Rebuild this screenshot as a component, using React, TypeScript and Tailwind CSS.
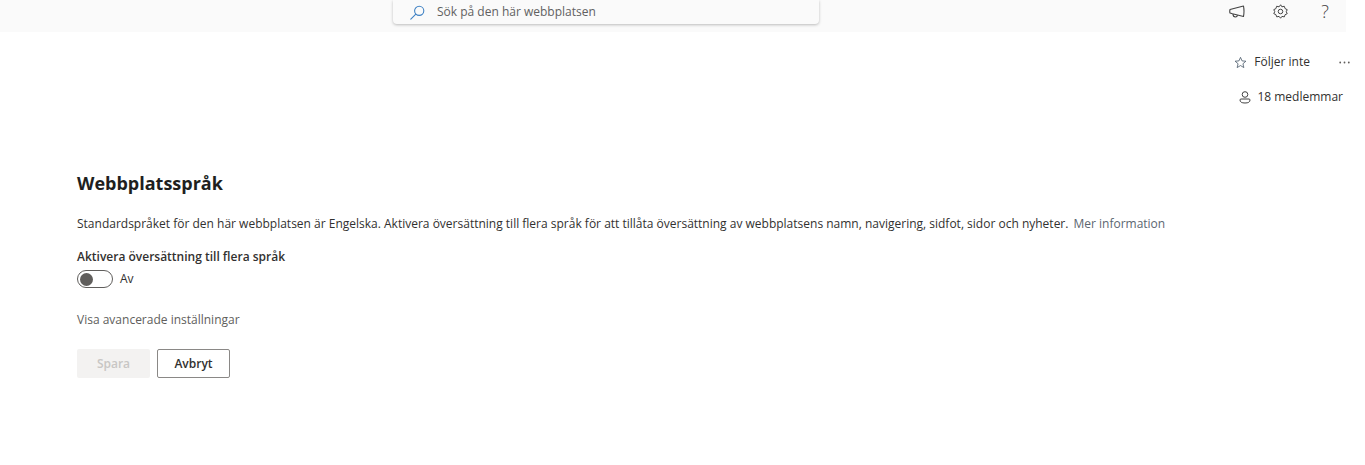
import React from "react";

export default function App() {
  return (
    <div className="w-[1365px] h-[465px] bg-white overflow-hidden font-['Open_Sans',sans-serif] text-[#323130] relative">
      <header className="w-[1346px] h-8 bg-[#fafafa] flex items-start">
        <div className="ml-[393px] w-[426px] h-6 bg-[#fafafa] rounded-b-[4px] shadow-[0_1px_3px_rgba(0,0,0,0.25)] flex items-center pl-[17px]">
          <svg width="15" height="15" viewBox="0 0 15 15" fill="none" stroke="#3f82c4" strokeWidth="1.1"><circle cx="9.2" cy="5.8" r="4.6" /><path d="M5.8 9.2 L0.8 14.2" strokeLinecap="round" /></svg>
          <span className="ml-[12px] text-[12px] text-[#616161]">Sök på den här webbplatsen</span>
        </div>
        <div className="ml-auto flex items-center h-5 mt-px mr-[15px] text-[#424242]">
          <svg width="16" height="13" viewBox="0 0 16 13" fill="none" stroke="#424242" strokeWidth="1.1" strokeLinejoin="round"><path d="M1 4.5 Q0.5 6.5 1 8 L3.5 8.8 L14.5 11.5 Q15.5 6 14.5 1 Z" /><path d="M4 9 Q4 12 6.5 12 Q8.2 12 8.5 10.2" /></svg>
          <svg className="ml-[27px]" width="17" height="17" viewBox="0 0 24 24" fill="none" stroke="#424242" strokeWidth="1.4"><circle cx="12" cy="12" r="3.2" /><path d="M12.2 2.5 14 5.4 17.3 4.6 18.5 7.9 21.5 9.4 20.1 12.3 21.5 15.1 18.5 16.5 17.4 19.6 14 18.9 12.1 21.5 10 18.9 6.7 19.6 5.5 16.4 2.5 15 3.9 12.2 2.5 9.4 5.5 7.9 6.6 4.6 10 5.4Z" strokeLinejoin="round" /></svg>
          <span className="ml-[30px] text-[18px] font-light leading-none w-3 text-center">?</span>
        </div>
      </header>
      <div className="flex flex-col items-end">
        <div className="flex items-center h-5 mt-5 text-[12px] mr-[15px]">
          <svg width="13" height="13" viewBox="0 0 24 24" fill="none" stroke="#4a5a6a" strokeWidth="1.5" strokeLinejoin="round"><path d="M12 2.5 14.8 9 22 9.6 16.5 14.3 18.2 21.4 12 17.6 5.8 21.4 7.5 14.3 2 9.6 9.2 9Z" /></svg>
          <span className="ml-[7px] font-medium">Följer inte</span>
          <svg className="ml-[29px]" width="11" height="3" viewBox="0 0 11 3" fill="#605e5c"><circle cx="1.2" cy="1.5" r="0.9" /><circle cx="5.5" cy="1.5" r="0.9" /><circle cx="9.8" cy="1.5" r="0.9" /></svg>
        </div>
        <div className="flex items-center h-5 mt-[15px] mr-[22px] text-[12px]">
          <svg width="12" height="13" viewBox="0 0 12 13" fill="none" stroke="#424242" strokeWidth="1"><circle cx="6" cy="3.5" r="2.8" /><path d="M1 9 Q1 8 2 8 L10 8 Q11 8 11 9 Q11 12 6 12 Q1 12 1 9 Z" /></svg>
          <span className="ml-[6px]">18 medlemmar</span>
        </div>
      </div>
      <main className="pl-[77px] pt-[64px]">
        <h1 className="text-[18px] font-bold leading-6 text-[#201f1e]">Webbplatsspråk</h1>
        <p className="mt-[21px] text-[12px] leading-4 whitespace-nowrap">
          Standardspråket för den här webbplatsen är Engelska. Aktivera översättning till flera språk för att tillåta översättning av webbplatsens namn, navigering, sidfot, sidor och nyheter.
          <span className="ml-[5px] text-[#5b6670]">Mer information</span>
        </p>
        <div className="mt-[17px] text-[12px] font-semibold leading-4">Aktivera översättning till flera språk</div>
        <div className="mt-[4px] flex items-center h-5">
          <div className="w-[36px] h-[18px] rounded-full border border-[#605e5c] flex items-center pl-[2px]">
            <div className="w-[13px] h-[13px] rounded-full bg-[#605e5c]" />
          </div>
          <span className="ml-[7px] text-[12px]">Av</span>
        </div>
        <div className="mt-[23px] text-[12px] leading-4 text-[#605e5c]">Visa avancerade inställningar</div>
        <div className="mt-[21px] flex gap-[7px]">
          <button className="w-[73px] h-[29px] rounded-[2px] bg-[#f3f2f1] text-[12px] font-semibold text-[#c8c6c4]">Spara</button>
          <button className="w-[73px] h-[29px] rounded-[2px] border border-[#8a8886] bg-white text-[12px] font-semibold text-[#323130]">Avbryt</button>
        </div>
      </main>
    </div>
  );
}
